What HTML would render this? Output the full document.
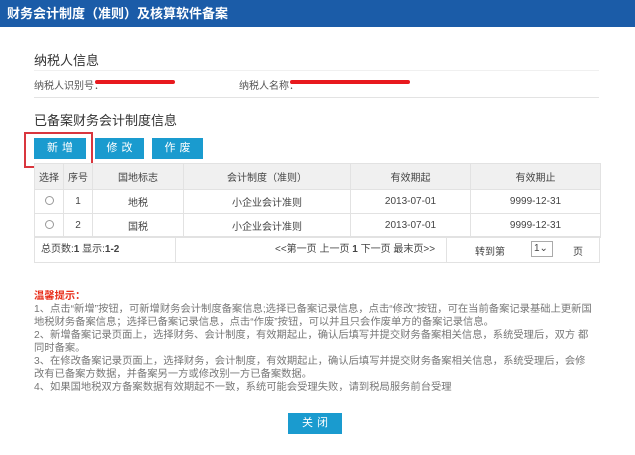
<!DOCTYPE html>
<html><head><meta charset="utf-8"><style>
*{margin:0;padding:0;box-sizing:border-box}
body{width:635px;height:455px;background:#fff;font-family:"Liberation Sans","Noto Sans CJK SC",sans-serif;color:#333;position:relative;overflow:hidden}
.hd{position:absolute;left:0;top:0;width:635px;height:27px;background:#1b5ca8;color:#fff;font-weight:bold;font-size:13px;line-height:27px;padding-left:7px}
.a{position:absolute}
.h2{font-size:13px;color:#333}
.sm{font-size:10px;color:#555}
.ln{position:absolute;height:1px;background:#e3e3e3}
.btn{position:absolute;background:#1a9bcf;color:#fff;font-size:11px;text-align:center;line-height:21px;height:21px;letter-spacing:4px;padding-left:4px}
table{position:absolute;left:34px;top:163px;width:566px;border-collapse:collapse;font-size:10px;color:#444;table-layout:fixed}
td{border:1px solid #e2e2e2;text-align:center;height:24px;vertical-align:middle}
tr.th td{background:#f0f0f0;height:26px}
.tips{position:absolute;left:34px;top:290px;width:560px;font-size:10.3px;line-height:13px;color:#777}
.red{position:absolute;border:2px solid #d9363e}
.rb{display:inline-block;width:9px;height:9px;border:1px solid #999;border-radius:50%}
</style></head><body>
<div class="hd">财务会计制度（准则）及核算软件备案</div>
<div class="a h2" style="left:34px;top:50px">纳税人信息</div>
<div class="ln" style="left:34px;top:70px;width:565px;background:#f0f0f0"></div>
<div class="a sm" style="left:34px;top:77px">纳税人识别号：</div>
<div class="a" style="left:95px;top:80px;width:80px;height:4px;background:#e8191e;border-radius:2px"></div>
<div class="a sm" style="left:239px;top:77px">纳税人名称：</div>
<div class="a" style="left:290px;top:80px;width:120px;height:4px;background:#e8191e;border-radius:2px"></div>
<div class="ln" style="left:34px;top:97px;width:565px"></div>
<div class="a h2" style="left:34px;top:110px">已备案财务会计制度信息</div>
<div class="btn" style="left:34px;top:138px;width:52px">新增</div>
<div class="btn" style="left:95px;top:138px;width:49px">修改</div>
<div class="btn" style="left:152px;top:138px;width:51px">作废</div>
<div class="red" style="left:24px;top:132px;width:69px;height:36px"></div>
<table>
<colgroup><col style="width:29px"><col style="width:29px"><col style="width:91px"><col style="width:167px"><col style="width:120px"><col style="width:130px"></colgroup>
<tr class="th"><td>选择</td><td>序号</td><td>国地标志</td><td>会计制度（准则）</td><td>有效期起</td><td>有效期止</td></tr>
<tr><td><span class="rb"></span></td><td>1</td><td>地税</td><td>小企业会计准则</td><td>2013-07-01</td><td>9999-12-31</td></tr>
<tr><td><span class="rb"></span></td><td>2</td><td>国税</td><td>小企业会计准则</td><td>2013-07-01</td><td>9999-12-31</td></tr>
</table>
<div class="a" style="left:34px;top:236px;width:566px;height:27px;border:1px solid #e2e2e2;font-size:10px;color:#444">
<div class="a" style="left:0;top:0;width:141px;height:25px;border-right:1px solid #e2e2e2;line-height:25px;padding-left:6px">总页数:<b>1</b> 显示:<b>1-2</b></div>
<div class="a" style="left:240px;top:0;line-height:25px">&lt;&lt;第一页 上一页 <b>1</b> 下一页 最末页&gt;&gt;</div>
<div class="a" style="left:411px;top:0;width:1px;height:25px;background:#e2e2e2"></div>
<div class="a" style="left:440px;top:6px">转到第</div>
<div class="a" style="left:496px;top:4px;width:22px;height:16px;border:1px solid #aaa;font-size:10px;line-height:14px;padding-left:2px">1⌄</div>
<div class="a" style="left:538px;top:6px">页</div>
</div>
<div class="tips"><span style="color:#e8301c;font-weight:bold">温馨提示：</span><br>1、点击“新增”按钮，可新增财务会计制度备案信息;选择已备案记录信息，点击“修改”按钮，可在当前备案记录基础上更新国地税财务备案信息；选择已备案记录信息，点击“作废”按钮，可以并且只会作废单方的备案记录信息。<br>2、新增备案记录页面上，选择财务、会计制度，有效期起止，确认后填写并提交财务备案相关信息，系统受理后，双方 都同时备案。<br>3、在修改备案记录页面上，选择财务，会计制度，有效期起止，确认后填写并提交财务备案相关信息，系统受理后，会修改有已备案方数据，并备案另一方或修改别一方已备案数据。<br>4、如果国地税双方备案数据有效期起不一致，系统可能会受理失败，请到税局服务前台受理</div>
<div class="btn" style="left:288px;top:413px;width:54px">关闭</div>
</body></html>
